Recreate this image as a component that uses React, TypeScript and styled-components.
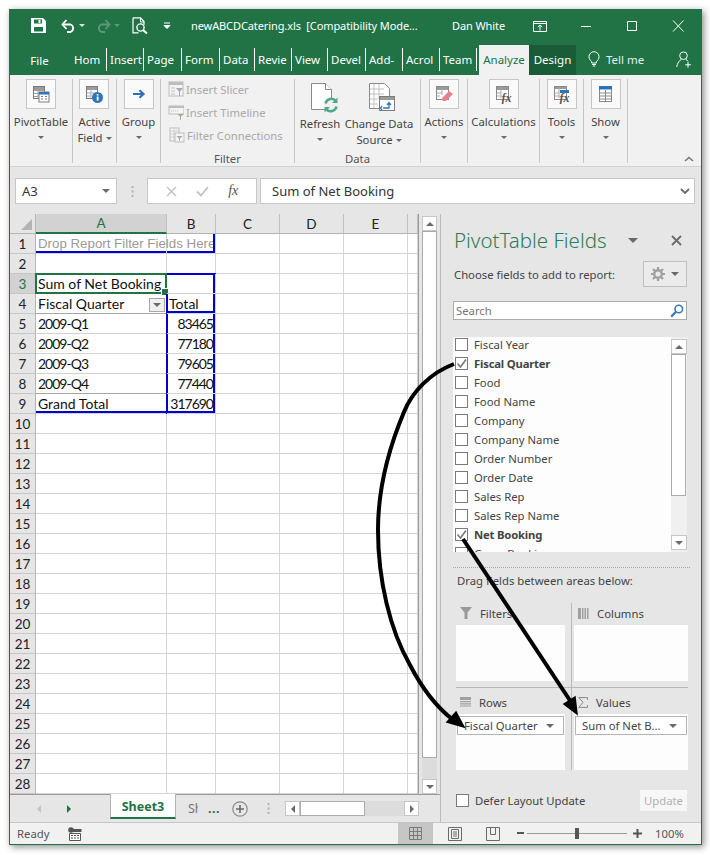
import React from "react";
import styled, { createGlobalStyle } from "styled-components";

const UI_FONT = `"Noto Sans", "Open Sans", sans-serif`;
const CELL_FONT = `Lato, "Open Sans", sans-serif`;
const GREEN = "#217346";
const BLUE = "#0000cd";

const GlobalStyle = createGlobalStyle`
  html, body { margin: 0; padding: 0; background: #ffffff; }
  body { font-family: ${UI_FONT}; }
  * { box-sizing: border-box; }
`;

/* ---------- window shell ---------- */

const Page = styled.div`
  position: relative;
  width: 710px;
  height: 855px;
  padding: 9px 0 0 9px;
  overflow: hidden;
`;

const Frame = styled.div`
  width: 693px;
  height: 836px;
  border: 1px solid ${GREEN};
  box-shadow: 2px 2px 7px rgba(0, 0, 0, 0.45);
  display: flex;
  flex-direction: column;
  background: #e6e6e6;
`;

const TitleBar = styled.div`
  height: 35px;
  flex: none;
  padding-bottom: 4px;
  background: ${GREEN};
  color: #ffffff;
  display: flex;
  align-items: center;
`;

const TitleSlot = styled.div<{ $left: number; $width: number }>`
  margin-left: ${(p) => p.$left}px;
  width: ${(p) => p.$width}px;
  flex: none;
  display: flex;
  align-items: center;
  justify-content: center;
  white-space: nowrap;
`;

const TitleText = styled.div<{ $width: number; $left?: number }>`
  margin-left: ${(p) => p.$left ?? 0}px;
  width: ${(p) => p.$width}px;
  flex: none;
  white-space: pre;
  font-size: 11px;
  letter-spacing: -0.1px;
`;

const TabRow = styled.div`
  height: 30px;
  flex: none;
  background: ${GREEN};
  display: flex;
  align-items: stretch;
  color: #ffffff;
  font-size: 11.5px;
`;

const FileTab = styled.div`
  width: 61px;
  flex: none;
  display: flex;
  align-items: center;
  justify-content: center;
  padding-right: 2px;
`;

const Tab = styled.div<{ $width: number }>`
  width: ${(p) => p.$width}px;
  flex: none;
  margin: 3px 0 4px;
  padding-left: 3px;
  border-right: 1px solid #ffffff;
  overflow: hidden;
  white-space: nowrap;
  display: flex;
  align-items: center;
`;

const ActiveTab = styled.div`
  width: 50px;
  margin-left: 2px;
  padding-bottom: 2px;
  flex: none;
  background: #f1f1f1;
  color: ${GREEN};
  display: flex;
  align-items: center;
  justify-content: center;
`;

const DesignTab = styled.div`
  width: 47px;
  padding-bottom: 2px;
  flex: none;
  background: #1a5c38;
  display: flex;
  align-items: center;
  justify-content: center;
`;

const TellMe = styled.div`
  margin-left: 12px;
  padding-bottom: 2px;
  width: 88px;
  flex: none;
  display: flex;
  align-items: center;
  gap: 6px;
  color: #e4efe9;
`;

const AccountIcon = styled.div`
  padding-bottom: 2px;
  display: flex;
  align-items: center;
`;

/* ---------- ribbon ---------- */

const Ribbon = styled.div`
  height: 92px;
  flex: none;
  position: relative;
  background: #f1f1f1;
  border-bottom: 1px solid #d2d2d2;
  display: flex;
  padding-top: 4px;
  color: #444444;
  font-size: 11.3px;
`;

const Group = styled.div<{ $width: number }>`
  width: ${(p) => p.$width}px;
  height: 84px;
  flex: none;
  border-right: 1px solid #c6c6c6;
  display: flex;
  flex-direction: column;
  align-items: center;
  position: relative;
`;

const GroupBody = styled.div`
  flex: 1;
  display: flex;
  justify-content: flex-start;
  width: 100%;
  min-height: 0;
`;

const GroupLabel = styled.div`
  height: 16px;
  margin-bottom: -4px;
  line-height: 16px;
  color: #555555;
  text-align: center;
`;

const BoxedButton = styled.div<{ $width?: number }>`
  width: ${(p) => (p.$width ? `${p.$width}px` : "auto")};
  flex: none;
  display: flex;
  flex-direction: column;
  align-items: center;
  line-height: 15px;
  white-space: nowrap;
`;

const IconBox = styled.div`
  width: 30px;
  height: 30px;
  background: #fafafa;
  border: 1px solid #c6c6c6;
  display: flex;
  align-items: center;
  justify-content: center;
  margin-bottom: 5px;
`;

const BareIcon = styled.div<{ $shift: number }>`
  height: 34px;
  padding-left: ${(p) => p.$shift}px;
  display: flex;
  align-items: flex-end;
  justify-content: center;
  margin-bottom: 3px;
`;

const ButtonLabel = styled.div`
  text-align: center;
  line-height: 16px;
`;

const Caret = styled.span<{ $inline?: boolean }>`
  display: ${(p) => (p.$inline ? "inline-block" : "block")};
  width: 0;
  height: 0;
  margin: ${(p) => (p.$inline ? "0 0 2px 3px" : "6px auto 0")};
  border-left: 3px solid transparent;
  border-right: 3px solid transparent;
  border-top: 3px solid #6a6a6a;
`;

const DisabledList = styled.div`
  display: flex;
  flex-direction: column;
  width: 100%;
  padding: 0 0 0 7px;
  gap: 3px;
  color: #a9a9a9;
`;

const DisabledItem = styled.div`
  height: 20px;
  display: flex;
  align-items: center;
  gap: 2px;
  white-space: nowrap;
`;

const CollapseChevron = styled.div`
  position: absolute;
  right: 7px;
  bottom: 4px;
  display: flex;
`;

/* ---------- formula bar ---------- */

const FormulaBand = styled.div`
  height: 47px;
  flex: none;
  background: #e6e6e6;
  padding: 11px 6px 0 5px;
  display: flex;
  align-items: flex-start;
  font-size: 13px;
  color: #333333;
`;

const NameBox = styled.div`
  width: 102px;
  height: 26px;
  background: #ffffff;
  border: 1px solid #c6c6c6;
  display: flex;
  align-items: center;
  justify-content: space-between;
  padding: 0 6px;
`;

const Grip = styled.div`
  width: 30px;
  height: 26px;
  display: flex;
  align-items: center;
  justify-content: center;
`;

const FormulaTools = styled.div`
  width: 110px;
  height: 26px;
  background: #ffffff;
  border: 1px solid #c6c6c6;
  display: flex;
  align-items: center;
  justify-content: space-around;
  padding: 0 8px;
`;

const FxLabel = styled.span`
  font-family: "Liberation Serif", serif;
  font-style: italic;
  font-size: 14px;
  color: #555555;
`;

const FormulaInput = styled.div`
  margin-left: 3px;
  width: 435px;
  height: 26px;
  background: #ffffff;
  border: 1px solid #c6c6c6;
  display: flex;
  align-items: center;
  justify-content: space-between;
  padding: 0 4px 0 11px;
`;

/* ---------- sheet ---------- */

const Body = styled.div`
  flex: 1;
  min-height: 0;
  display: flex;
`;

const SheetColumn = styled.div`
  width: 430px;
  flex: none;
  display: flex;
  flex-direction: column;
`;

const SheetRow = styled.div`
  height: 580px;
  flex: none;
  display: flex;
`;

const Grid = styled.div`
  width: 409px;
  height: 580px;
  flex: none;
  background: #ffffff;
  border-right: 1px solid #9a9a9a;
  display: grid;
  grid-template-columns: 26px 131px 49px 64px 64px 64px 10px;
  grid-template-rows: repeat(29, 20px);
  font-family: ${CELL_FONT};
  font-size: 14px;
  color: #111111;
`;

const Corner = styled.div`
  background: #e6e6e6;
  border-right: 1px solid #b4b4b4;
  border-bottom: 1px solid #b4b4b4;
  display: flex;
  align-items: flex-end;
  justify-content: flex-end;
  padding: 0 3px 3px 0;
`;

const ColHeader = styled.div<{ $active?: boolean }>`
  background: ${(p) => (p.$active ? "#d2d2d2" : "#e6e6e6")};
  color: ${(p) => (p.$active ? GREEN : "#222222")};
  border-right: 1px solid #c0c0c0;
  border-bottom: ${(p) => (p.$active ? `2px solid ${GREEN}` : "1px solid #b4b4b4")};
  display: flex;
  align-items: center;
  justify-content: center;
  font-size: 13.5px;
`;

const RowHeader = styled.div<{ $active?: boolean }>`
  background: ${(p) => (p.$active ? "#d2d2d2" : "#e6e6e6")};
  color: ${(p) => (p.$active ? GREEN : "#222222")};
  border-right: ${(p) => (p.$active ? `1px solid ${GREEN}` : "1px solid #b4b4b4")};
  border-bottom: 1px solid #c6c6c6;
  display: flex;
  align-items: center;
  justify-content: center;
  font-size: 13.5px;
`;

type Edges = { top?: boolean; right?: boolean; bottom?: boolean; left?: boolean };

// blue pivot outline, drawn half over the gridline like Excel does
const edgeShadow = (e?: Edges) => {
  if (!e) return "none";
  const parts: string[] = [];
  if (e.top) parts.push(`0 -1px 0 ${BLUE}, inset 0 1px 0 ${BLUE}`);
  if (e.right) parts.push(`inset -2px 0 0 ${BLUE}`);
  if (e.bottom) parts.push(`inset 0 -2px 0 ${BLUE}`);
  if (e.left) parts.push(`-1px 0 0 ${BLUE}, inset 1px 0 0 ${BLUE}`);
  return parts.join(", ") || "none";
};

const Cell = styled.div<{ $edges?: Edges; $align?: string; $muted?: boolean; $pivotLine?: boolean; $tight?: boolean }>`
  position: relative;
  border-right: 1px solid #d4d4d4;
  border-bottom: 1px solid ${(p) => (p.$pivotLine ? "#a6a6a6" : "#d4d4d4")};
  box-shadow: ${(p) => edgeShadow(p.$edges)};
  padding: 0 2px;
  display: flex;
  align-items: center;
  justify-content: ${(p) => p.$align ?? "flex-start"};
  white-space: nowrap;
  color: ${(p) => (p.$muted ? "#9a9a9a" : "inherit")};
  font-family: ${(p) => (p.$muted ? `"Liberation Sans", sans-serif` : "inherit")};
  font-size: ${(p) => (p.$muted ? "13.3px" : "inherit")};
  letter-spacing: ${(p) => (p.$tight ? "-1px" : "normal")};
  overflow: visible;
  min-width: 0;
`;

const Selection = styled.div`
  position: absolute;
  inset: -1px;
  border: 2px solid ${GREEN};
  pointer-events: none;
  &::after {
    content: "";
    position: absolute;
    right: -4px;
    bottom: -4px;
    width: 6px;
    height: 6px;
    background: ${GREEN};
    border: 1px solid #ffffff;
  }
`;

const FilterButton = styled.div`
  position: absolute;
  right: 1px;
  top: 4px;
  width: 16px;
  height: 14px;
  background: #f0f0f0;
  border: 1px solid #a6a6a6;
  display: flex;
  align-items: center;
  justify-content: center;
`;

const VScroll = styled.div`
  margin-left: 3px;
  margin-top: 2px;
  width: 15px;
  height: 578px;
  flex: none;
  display: flex;
  flex-direction: column;
  background: #dcdcdc;
`;

const ScrollButton = styled.div<{ $w?: number; $h?: number }>`
  width: ${(p) => p.$w ?? 15}px;
  height: ${(p) => p.$h ?? 15}px;
  flex: none;
  background: #ffffff;
  border: 1px solid #c6c6c6;
  display: flex;
  align-items: center;
  justify-content: center;
`;

const ScrollThumb = styled.div<{ $h: number }>`
  width: 15px;
  height: ${(p) => p.$h}px;
  flex: none;
  background: #ffffff;
  border: 1px solid #ababab;
`;

const ScrollTrack = styled.div`
  flex: 1;
  width: 15px;
`;

const Arrow = styled.span<{ $dir: "up" | "down" | "left" | "right"; $color?: string; $size?: number }>`
  width: 0;
  height: 0;
  display: block;
  flex: none;
  ${(p) => {
    const c = p.$color ?? "#6a6a6a";
    const s = p.$size ?? 4;
    if (p.$dir === "up") return `border-left:${s}px solid transparent;border-right:${s}px solid transparent;border-bottom:${s}px solid ${c};`;
    if (p.$dir === "down") return `border-left:${s}px solid transparent;border-right:${s}px solid transparent;border-top:${s}px solid ${c};`;
    if (p.$dir === "left") return `border-top:${s}px solid transparent;border-bottom:${s}px solid transparent;border-right:${s}px solid ${c};`;
    return `border-top:${s}px solid transparent;border-bottom:${s}px solid transparent;border-left:${s}px solid ${c};`;
  }}
`;

/* ---------- sheet tabs ---------- */

const SheetTabBar = styled.div`
  flex: 1;
  border-top: 1px solid #9a9a9a;
  background: #e6e6e6;
  display: flex;
  align-items: stretch;
  font-size: 12.5px;
  color: #777777;
`;

const TabNav = styled.div`
  width: 100px;
  flex: none;
  display: flex;
  align-items: center;
  padding-left: 27px;
  gap: 26px;
`;

const SheetTab = styled.div`
  width: 66px;
  height: 25px;
  flex: none;
  background: #ffffff;
  border-left: 1px solid #b4b4b4;
  border-right: 1px solid #b4b4b4;
  border-bottom: 2px solid ${GREEN};
  margin-top: -1px;
  padding-top: 2px;
  color: ${GREEN};
  font-weight: 700;
  display: flex;
  align-items: center;
  justify-content: center;
`;

const OtherSheet = styled.div`
  margin-left: 12px;
  width: 10px;
  flex: none;
  overflow: hidden;
  display: flex;
  align-items: center;
`;

const Ellipsis = styled.div`
  margin-left: 10px;
  flex: none;
  width: 24px;
  color: ${GREEN};
  font-weight: 700;
  display: flex;
  align-items: center;
  letter-spacing: 0.5px;
`;

const AddSheet = styled.div`
  flex: none;
  width: 30px;
  display: flex;
  align-items: center;
  justify-content: flex-start;
`;

const SheetGrip = styled.div`
  flex: none;
  width: 23px;
  display: flex;
  align-items: center;
  padding-left: 5px;
`;

const HScroll = styled.div`
  width: 134px;
  flex: none;
  height: 15px;
  margin-top: 6px;
  display: flex;
  background: #dcdcdc;
`;

const HThumb = styled.div`
  width: 65px;
  flex: none;
  height: 15px;
  background: #ffffff;
  border: 1px solid #ababab;
`;

const HTrack = styled.div`
  flex: 1;
`;

/* ---------- pivot panel ---------- */

const Panel = styled.div`
  flex: 1;
  min-width: 0;
  border-left: 1px solid #bcbcbc;
  background: #e6e6e6;
  padding: 0 14px 0 12px;
  display: flex;
  flex-direction: column;
  color: #444444;
  font-size: 11.3px;
`;

const PanelHeader = styled.div`
  height: 36px;
  margin-top: 8px;
  padding-left: 1px;
  display: flex;
  align-items: center;
  justify-content: space-between;
`;

const PanelTitle = styled.div`
  font-size: 20.5px;
  font-weight: 300;
  color: #2c7d54;
  white-space: nowrap;
`;

const PanelTools = styled.div`
  display: flex;
  align-items: center;
  gap: 33px;
  padding-right: 5px;
`;

const ChooseRow = styled.div`
  margin-top: 3px;
  height: 26px;
  padding-left: 1px;
  display: flex;
  align-items: center;
  justify-content: space-between;
`;

const GearButton = styled.div`
  width: 44px;
  height: 26px;
  background: #ebebeb;
  border: 1px solid #c0c0c0;
  display: flex;
  align-items: center;
  justify-content: center;
  gap: 6px;
`;

const SearchBox = styled.div`
  margin-top: 14px;
  height: 19px;
  background: #ffffff;
  border: 1px solid #ababab;
  display: flex;
  align-items: center;
  justify-content: space-between;
  padding: 0 2px;
  color: #777777;
`;

const FieldList = styled.div`
  margin-top: 17px;
  height: 215px;
  background: #fdfdfd;
  display: flex;
  overflow: hidden;
`;

const Fields = styled.div`
  flex: 1;
  min-width: 0;
  margin-top: -2px;
  padding-left: 2px;
  overflow: hidden;
`;

const FieldRow = styled.div<{ $bold?: boolean }>`
  height: 19px;
  display: flex;
  align-items: center;
  gap: 6px;
  font-weight: ${(p) => (p.$bold ? 700 : 400)};
  letter-spacing: ${(p) => (p.$bold ? "-0.2px" : "normal")};
  white-space: nowrap;
`;

const Check = styled.div`
  width: 13px;
  height: 13px;
  flex: none;
  background: #ffffff;
  border: 1px solid #7a7a7a;
  display: flex;
  align-items: center;
  justify-content: center;
`;

const ListScroll = styled.div`
  width: 16px;
  flex: none;
  display: flex;
  flex-direction: column;
  padding-top: 2px;
  padding-bottom: 2px;
  background: #f0f0f0;
`;

const Dotted = styled.div`
  margin-top: 15px;
  margin-right: -3px;
  border-top: 1px dotted #a6a6a6;
`;

const DragHint = styled.div`
  margin-top: 5px;
  padding-left: 4px;
  height: 16px;
  line-height: 16px;
`;

const Areas = styled.div`
  margin-top: 14px;
  padding-left: 3px;
  display: grid;
  grid-template-columns: 115px 117px;
  grid-template-rows: 84px 83px;
`;

const Area = styled.div<{ $right?: boolean; $lower?: boolean }>`
  display: flex;
  flex-direction: column;
  border-left: ${(p) => (p.$right ? "1px solid #b8b8b8" : "none")};
  padding-left: ${(p) => (p.$right ? "2px" : "0")};
  padding-right: ${(p) => (p.$right ? "0" : "6px")};
  padding-top: ${(p) => (p.$lower ? "4px" : "0")};
  padding-bottom: ${(p) => (p.$lower ? "0" : "6px")};
  border-top: ${(p) => (p.$lower ? "1px solid #b8b8b8" : "none")};
`;

const AreaHead = styled.div`
  height: 22px;
  padding: 0 0 2px 4px;
  display: flex;
  align-items: center;
  gap: 8px;
  flex: none;
`;

const AreaBox = styled.div`
  flex: 1;
  background: #fdfdfd;
  padding: 2px 1px;
`;

const Chip = styled.div`
  height: 19px;
  background: #ffffff;
  border: 1px solid #b4b4b4;
  display: flex;
  align-items: center;
  justify-content: space-between;
  padding: 0 9px 0 6px;
  white-space: nowrap;
`;

const PanelFooter = styled.div`
  margin-top: 20px;
  padding-left: 3px;
  height: 21px;
  display: flex;
  align-items: center;
  justify-content: space-between;
`;

const DeferLabel = styled.div`
  display: flex;
  align-items: center;
  gap: 6px;
`;

const UpdateButton = styled.div`
  width: 47px;
  height: 21px;
  background: #f7f7f7;
  color: #b0b0b0;
  display: flex;
  align-items: center;
  justify-content: center;
`;

/* ---------- status bar ---------- */

const StatusBar = styled.div`
  height: 22px;
  flex: none;
  background: #f1f1f1;
  border-top: 1px solid #c6c6c6;
  display: flex;
  align-items: center;
  font-size: 11.3px;
  color: #555555;
`;

const ReadyText = styled.div`
  width: 58px;
  padding-left: 7px;
  flex: none;
`;

const ViewActive = styled.div`
  margin-left: 316px;
  width: 35px;
  height: 21px;
  background: #c6c6c6;
  flex: none;
  display: flex;
  align-items: center;
  justify-content: center;
`;

const ViewButton = styled.div<{ $left?: number }>`
  margin-left: ${(p) => p.$left ?? 0}px;
  width: 38px;
  flex: none;
  display: flex;
  align-items: center;
  justify-content: center;
`;

const ZoomControl = styled.div`
  margin-left: 5px;
  display: flex;
  align-items: center;
  flex: none;
  width: 130px;
  gap: 3px;
`;

const ZoomTrack = styled.div`
  position: relative;
  width: 100px;
  height: 1px;
  margin-right: 3px;
  background: #9a9a9a;
  flex: none;
`;

const ZoomThumb = styled.div`
  position: absolute;
  left: 48px;
  top: -5px;
  width: 4px;
  height: 11px;
  background: #555555;
`;

const ZoomValue = styled.div`
  margin-left: 8px;
`;

const ArrowLayer = styled.svg`
  position: absolute;
  left: 0;
  top: 0;
  pointer-events: none;
`;

/* ---------- drawings ---------- */

const SheetGlyph = ({ accent }: { accent?: string }) => (
  <svg width="20" height="20" viewBox="0 0 20 20">
    <rect x="2.5" y="2.5" width="11" height="12" fill="#fff" stroke="#7a7a7a" />
    <path d="M3 6.5h10M3 9.5h4M3 12.5h4M7 3v11" stroke="#a0a0a0" fill="none" />
    <rect x="3" y="3" width="10" height="3" fill="#9a9a9a" />
    <rect x="8" y="8" width="10" height="10" fill="#fff" stroke="#7a7a7a" />
    {accent && <rect x="8" y="8" width="10" height="2.5" fill={accent} />}
    <path d="M10 12.5h2M14 12.5h2M10 15h2M14 15h2" stroke="#7a7a7a" />
  </svg>
);

const InfoGlyph = () => (
  <svg width="22" height="22" viewBox="0 0 22 22">
    <rect x="3.5" y="3.5" width="11" height="12" fill="#fff" stroke="#7a7a7a" />
    <rect x="4" y="4" width="10" height="3" fill="#9a9a9a" />
    <path d="M4 10h10M4 13h4M8 4v11" stroke="#a8a8a8" />
    <circle cx="14.5" cy="14.5" r="5.5" fill="#2f75b5" />
    <rect x="13.7" y="13.5" width="1.8" height="4" fill="#fff" />
    <rect x="13.7" y="11" width="1.8" height="1.6" fill="#fff" />
  </svg>
);

const GroupGlyph = () => (
  <svg width="14" height="10" viewBox="0 0 14 10">
    <path d="M1 5h10M7.5 1.2L11.5 5 7.5 8.8" stroke="#2f6fb5" strokeWidth="2.2" fill="none" />
  </svg>
);

const SlicerGlyph = () => (
  <svg width="16" height="16" viewBox="0 0 16 16">
    <rect x="1" y="1" width="14" height="14" fill="#f4f4f4" stroke="#bdbdbd" />
    <rect x="1" y="1" width="14" height="3" fill="#bdbdbd" />
    <path d="M3 7h4M3 10h4M3 13h4" stroke="#bdbdbd" />
    <path d="M8 7h7l-3 3.5V15h-1v-4.5z" fill="#a8a8a8" />
  </svg>
);

const TimelineGlyph = () => (
  <svg width="16" height="16" viewBox="0 0 16 16">
    <rect x="1" y="2" width="15" height="8" fill="#f4f4f4" stroke="#bdbdbd" />
    <rect x="1" y="2" width="15" height="2" fill="#bdbdbd" />
    <path d="M3 7h7" stroke="#bdbdbd" strokeDasharray="1 1" />
    <path d="M9 10h7l-3 2.5V16h-1v-3.5z" fill="#a8a8a8" />
  </svg>
);

const ConnectionGlyph = () => (
  <svg width="17" height="17" viewBox="0 0 17 17">
    <rect x="2" y="1" width="9" height="13" fill="#f4f4f4" stroke="#bdbdbd" />
    <path d="M2 4h9M2 7h9M2 10h9M6 1v13" stroke="#cfcfcf" />
    <rect x="7" y="6" width="9" height="9" fill="#f4f4f4" stroke="#bdbdbd" />
    <path d="M8.5 9h6l-2.5 2.5V14h-1v-2.5z" fill="#a8a8a8" />
  </svg>
);

const RefreshGlyph = () => (
  <svg width="30" height="31" viewBox="0 0 30 31">
    <path d="M2.5 1.5h14l6 6v20h-20z" fill="#fff" stroke="#8a8a8a" />
    <path d="M16.5 1.5v6h6" fill="#fff" stroke="#8a8a8a" />
    <circle cx="22" cy="23" r="7" fill="#f1f1f1" />
    <path d="M16.5 21.5a6 6 0 0 1 10.5-2.5" stroke="#4ea88a" strokeWidth="2.6" fill="none" />
    <path d="M27.5 24.5a6 6 0 0 1-10.5 2.5" stroke="#4ea88a" strokeWidth="2.6" fill="none" />
    <path d="M28.5 15.5v5.5h-5.5zM15.5 30.5V25h5.5z" fill="#4ea88a" />
  </svg>
);

const ChangeSourceGlyph = () => (
  <svg width="28" height="31" viewBox="0 0 28 31">
    <path d="M1.5 1.5h15l5 5v20h-20z" fill="#fff" stroke="#8a8a8a" />
    <path d="M2 7h14M2 12h14M2 17h8M2 22h8M6 2v24M11 2v15" stroke="#c0c0c0" fill="none" />
    <rect x="11.5" y="14.5" width="15" height="14" fill="#fff" stroke="#7a7a7a" />
    <rect x="12" y="15" width="14" height="3" fill="#9a9a9a" />
    <path d="M15 26h6v-5M19 23l2-2.5 2 2.5M14 24l-1.5 2 1.5 2" stroke="#2f75b5" strokeWidth="1.3" fill="none" />
  </svg>
);

const ActionsGlyph = () => (
  <svg width="20" height="20" viewBox="0 0 20 20">
    <rect x="2.5" y="2.5" width="12" height="13" fill="#fff" stroke="#8a8a8a" />
    <rect x="3" y="3" width="11" height="3" fill="#9a9a9a" />
    <path d="M3 9h5M3 12h3M8 3v8" stroke="#a8a8a8" />
    <path d="M8 14l7-7 4 3-7 7H9z" fill="#e8808f" />
  </svg>
);

const CalcGlyph = ({ accent }: { accent?: string }) => (
  <svg width="20" height="20" viewBox="0 0 20 20">
    <rect x="2.5" y="2.5" width="12" height="13" fill="#fff" stroke="#8a8a8a" />
    <rect x="3" y="3" width="11" height={accent ? 2 : 3} fill="#9a9a9a" />
    {accent && <rect x="8" y="6" width="9" height="3" fill={accent} />}
    <path d="M3 9h4M3 12h4M7 3v11" stroke="#a8a8a8" />
    <text x="7.5" y="18" fontFamily="Liberation Serif, serif" fontStyle="italic" fontWeight="700" fontSize="12" fill="#555">fx</text>
  </svg>
);

const ShowGlyph = () => (
  <svg width="15" height="16" viewBox="0 0 15 16">
    <rect x="1.5" y="0.5" width="12" height="15" fill="#fff" stroke="#8a8a8a" />
    <rect x="1" y="0" width="13" height="3.5" fill="#2f6fb5" />
    <path d="M2 7h11M2 10h11M2 13h11M7.5 4v11" stroke="#8a8a8a" />
  </svg>
);

const PlainGlyph = ({ name }: { name: string }) => {
  switch (name) {
    case "pivot": return <SheetGlyph accent="#2f75b5" />;
    case "info": return <InfoGlyph />;
    case "group": return <GroupGlyph />;
    case "actions": return <ActionsGlyph />;
    case "calc": return <CalcGlyph />;
    case "tools": return <CalcGlyph accent="#2f75b5" />;
    default: return <ShowGlyph />;
  }
};

const SaveIcon = () => (
  <svg width="15" height="15" viewBox="0 0 15 15">
    <path fillRule="evenodd" fill="#fff" d="M0 0h12l3 3v12H0zM3 1.5v4h8v-4zM3 9v4.5h9V9z" />
    <rect x="7.5" y="2" width="2" height="3" fill="#fff" />
  </svg>
);

const UndoIcon = ({ color }: { color: string }) => (
  <svg width="15" height="14" viewBox="0 0 15 14">
    <path d="M1.5 5.5h8a4 4 0 0 1 0 7.5H6" stroke={color} strokeWidth="1.8" fill="none" />
    <path d="M5.5 1L1.5 5.5 5.5 10" stroke={color} strokeWidth="1.8" fill="none" />
  </svg>
);

const PreviewIcon = () => (
  <svg width="16" height="17" viewBox="0 0 16 17">
    <path d="M1 .8h7.5L12 4.5V8M1 .8v15h5.5" stroke="#fff" strokeWidth="1.2" fill="none" />
    <circle cx="8.5" cy="10.5" r="3.6" stroke="#fff" strokeWidth="1.4" fill="none" />
    <path d="M11 13l4 3.5" stroke="#fff" strokeWidth="2" />
    <path d="M8.5 1v4H12" stroke="#fff" fill="none" />
  </svg>
);

const GreenWindowIcon = ({ kind }: { kind: "ribbon" | "min" | "max" | "close" }) => (
  <svg width="14" height="12" viewBox="0 0 14 12">
    {kind === "ribbon" && (
      <path d="M.5 1.5h13v10H.5zM.5 3.5h13M7 10.5V5M4.8 7L7 5l2.2 2" stroke="#fff" fill="none" />
    )}
    {kind === "min" && <path d="M2 6.5h10" stroke="#fff" />}
    {kind === "max" && <path d="M2.5 1.5h9v9h-9z" stroke="#fff" fill="none" />}
    {kind === "close" && <path d="M2 .5l10.5 11M12.5 .5L2 11.5" stroke="#fff" fill="none" />}
  </svg>
);

const BulbIcon = () => (
  <svg width="12" height="16" viewBox="0 0 12 16">
    <path d="M3.6 10.6C2.6 9.4 1 8.3 1 5.7a5 5 0 0 1 10 0c0 2.6-1.6 3.7-2.6 4.9V12H3.6z" stroke="#fff" fill="none" />
    <path d="M4 13.5h4M4.8 15h2.4" stroke="#fff" />
  </svg>
);

const PersonIcon = () => (
  <svg width="16" height="17" viewBox="0 0 16 17">
    <circle cx="7.5" cy="4.7" r="3.8" stroke="#fff" fill="none" />
    <path d="M.7 16c.6-3.8 2.6-6.6 4.6-7.6M9.8 8.4c1 .4 1.6 1 2.2 2" stroke="#fff" fill="none" />
    <path d="M12 11v5.6M9.3 13.8h5.6" stroke="#fff" />
  </svg>
);

const GridViewIcon = () => (
  <svg width="13" height="13" viewBox="0 0 13 13">
    <path d="M.5.5h12v12H.5zM4.5.5v12M8.5.5v12M.5 4.5h12M.5 8.5h12" stroke="#7a7a7a" fill="none" />
  </svg>
);

const FilterGlyph = () => (
  <svg width="12" height="12" viewBox="0 0 12 12">
    <path d="M0 0h12L7.5 5.5V12H4.5V5.5z" fill="#9a9a9a" />
  </svg>
);

const ColumnsGlyph = () => (
  <svg width="11" height="11" viewBox="0 0 11 11">
    <path d="M0 0h3v11H0zM4 0h1.5v11H4zM6.5 0H8v11H6.5zM9 0h1.5v11H9z" fill="#a0a0a0" />
  </svg>
);

const RowsGlyph = () => (
  <svg width="11" height="10" viewBox="0 0 11 10">
    <path d="M0 0h11v3H0zM0 4h11v1.2H0zM0 6.2h11v1.2H0zM0 8.4h11v1.2H0z" fill="#a0a0a0" />
  </svg>
);

const SigmaGlyph = () => (
  <svg width="10" height="11" viewBox="0 0 10 11">
    <path d="M9.5 2.8V.6H.8L5 5.4.8 10.4h8.7V8.2" stroke="#8a8a8a" fill="none" />
  </svg>
);

const GearIcon = () => (
  <svg width="14" height="14" viewBox="0 0 14 14">
    <circle cx="7" cy="7" r="3.8" stroke="#a0a0a0" strokeWidth="2.4" fill="none" />
    <path d="M7 0v3M7 11v3M0 7h3M11 7h3M2 2l2.2 2.2M9.8 9.8L12 12M12 2L9.8 4.2M4.2 9.8L2 12" stroke="#a0a0a0" strokeWidth="2.2" />
  </svg>
);

const SearchIcon = () => (
  <svg width="14" height="14" viewBox="0 0 14 14">
    <circle cx="8.8" cy="5" r="3.8" stroke="#3a78b8" strokeWidth="1.6" fill="none" />
    <path d="M6 7.8L1.2 12.6" stroke="#3a78b8" strokeWidth="2.2" />
  </svg>
);

const CheckMark = () => (
  <svg width="11" height="11" viewBox="0 0 11 11">
    <path d="M1.5 5.5l3 3.5L10 1.5" stroke="#777" strokeWidth="1.6" fill="none" />
  </svg>
);

const GripDots = () => (
  <svg width="3" height="11" viewBox="0 0 3 11">
    <path d="M1.5 0v2M1.5 4.5v2M1.5 9v2" stroke="#b0b0b0" strokeWidth="2" />
  </svg>
);

/* ---------- data ---------- */

const tabs: [string, number][] = [
  ["Hom", 36], ["Insert", 37], ["Page", 38], ["Form", 38], ["Data", 35], ["Revie", 37],
  ["View", 36], ["Devel", 38], ["Add-", 37], ["Acrol", 37], ["Team", 37],
];

const fields: [string, boolean][] = [
  ["Fiscal Year", false], ["Fiscal Quarter", true], ["Food", false], ["Food Name", false],
  ["Company", false], ["Company Name", false], ["Order Number", false], ["Order Date", false],
  ["Sales Rep", false], ["Sales Rep Name", false], ["Net Booking", true], ["Gross Booking", false],
];

type CellSpec = {
  text?: string;
  edges?: Edges;
  align?: string;
  muted?: boolean;
  selected?: boolean;
  filter?: boolean;
  pivotLine?: boolean;
  tight?: boolean;
};

const valueEdges: Edges = { right: true, left: true };
const value = (text: string): CellSpec => ({ text, align: "flex-end", edges: valueEdges, tight: true });

const sheet: Record<number, CellSpec[]> = {
  1: [{ text: "Drop Report Filter Fields Here", muted: true, edges: { bottom: true } }, { edges: { bottom: true, right: true } }],
  3: [{ text: "Sum of Net Booking", selected: true, edges: { top: true } }, { edges: { top: true, right: true } }],
  4: [{ text: "Fiscal Quarter", filter: true, pivotLine: true }, { text: "Total", edges: { right: true, bottom: true, left: true } }],
  5: [{ text: "2009-Q1", tight: true }, value("83465")],
  6: [{ text: "2009-Q2", tight: true }, value("77180")],
  7: [{ text: "2009-Q3", tight: true }, value("79605")],
  8: [{ text: "2009-Q4", tight: true, pivotLine: true }, value("77440")],
  9: [{ text: "Grand Total", edges: { bottom: true } }, { ...value("317690"), edges: { right: true, left: true, bottom: true } }],
};

const rows = Array.from({ length: 28 }, (_, i) => i + 1);

function SheetCells({ row }: { row: number }) {
  const spec = sheet[row] ?? [];
  return (
    <>
      <RowHeader $active={row === 3}>{row}</RowHeader>
      {[0, 1, 2, 3, 4, 5].map((c) => {
        const s = spec[c];
        return (
          <Cell key={c} $edges={s?.edges} $align={s?.align} $muted={s?.muted} $pivotLine={s?.pivotLine} $tight={s?.tight}>
            {s?.text}
            {s?.selected && <Selection />}
            {s?.filter && (
              <FilterButton>
                <Arrow $dir="down" />
              </FilterButton>
            )}
          </Cell>
        );
      })}
    </>
  );
}

export default function App() {
  return (
    <Page>
      <GlobalStyle />
      <Frame>
        <TitleBar>
          <TitleSlot $left={21} $width={15}><SaveIcon /></TitleSlot>
          <TitleSlot $left={14} $width={16}><UndoIcon color="#fff" /></TitleSlot>
          <TitleSlot $left={2} $width={8}><Arrow $dir="down" $color="#d8e8df" $size={3} /></TitleSlot>
          <TitleSlot $left={9} $width={16}><span style={{ display: "flex", transform: "scaleX(-1)" }}><UndoIcon color="#5a9a78" /></span></TitleSlot>
          <TitleSlot $left={2} $width={8}><Arrow $dir="down" $color="#5a9a78" $size={3} /></TitleSlot>
          <TitleSlot $left={10} $width={17}><PreviewIcon /></TitleSlot>
          <TitleSlot $left={15} $width={8}>
            <svg width="8" height="8" viewBox="0 0 8 8"><path d="M1 1h6M1 3.5h6l-3 3z" stroke="#fff" strokeWidth="1" fill="#fff" /></svg>
          </TitleSlot>
          <TitleText $left={20} $width={261}>newABCDCatering.xls  [Compatibility Mode...</TitleText>
          <TitleText $width={81}>Dan White</TitleText>
          <TitleSlot $left={0} $width={14}><GreenWindowIcon kind="ribbon" /></TitleSlot>
          <TitleSlot $left={32} $width={14}><GreenWindowIcon kind="min" /></TitleSlot>
          <TitleSlot $left={32} $width={14}><GreenWindowIcon kind="max" /></TitleSlot>
          <TitleSlot $left={32} $width={14}><GreenWindowIcon kind="close" /></TitleSlot>
        </TitleBar>
        <TabRow>
          <FileTab>File</FileTab>
          {tabs.map(([name, width]) => (
            <Tab key={name} $width={width}>{name}</Tab>
          ))}
          <ActiveTab>Analyze</ActiveTab>
          <DesignTab>Design</DesignTab>
          <TellMe><BulbIcon />Tell me</TellMe>
          <AccountIcon><PersonIcon /></AccountIcon>
        </TabRow>
        <Ribbon>
          {[
            { w: 63, label: "PivotTable", icon: "pivot" },
            { w: 44, label: "Active\nField", icon: "info", inline: true },
            { w: 44, label: "Group", icon: "group" },
          ].map((b) => (
            <Group key={b.label} $width={b.w}>
              <BoxedButton>
                <IconBox><PlainGlyph name={b.icon} /></IconBox>
                {b.inline ? (
                  <ButtonLabel>Active<br />Field<Caret $inline /></ButtonLabel>
                ) : (
                  <>
                    <ButtonLabel>{b.label}</ButtonLabel>
                    <Caret />
                  </>
                )}
              </BoxedButton>
            </Group>
          ))}
          <Group $width={134}>
            <GroupBody>
              <DisabledList>
                <DisabledItem><SlicerGlyph />Insert Slicer</DisabledItem>
                <DisabledItem><TimelineGlyph />Insert Timeline</DisabledItem>
                <DisabledItem><ConnectionGlyph />Filter Connections</DisabledItem>
              </DisabledList>
            </GroupBody>
            <GroupLabel>Filter</GroupLabel>
          </Group>
          <Group $width={126}>
            <GroupBody>
              <BoxedButton $width={50}>
                <BareIcon $shift={8}><RefreshGlyph /></BareIcon>
                <ButtonLabel>Refresh</ButtonLabel>
                <Caret />
              </BoxedButton>
              <BoxedButton $width={68}>
                <BareIcon $shift={5}><ChangeSourceGlyph /></BareIcon>
                <ButtonLabel>Change Data<br />Source<Caret $inline /></ButtonLabel>
              </BoxedButton>
            </GroupBody>
            <GroupLabel>Data</GroupLabel>
          </Group>
          {[
            { w: 47, label: "Actions", icon: "actions" },
            { w: 72, label: "Calculations", icon: "calc" },
            { w: 44, label: "Tools", icon: "tools" },
            { w: 44, label: "Show", icon: "show" },
          ].map((b) => (
            <Group key={b.label} $width={b.w}>
              <BoxedButton>
                <IconBox><PlainGlyph name={b.icon} /></IconBox>
                <ButtonLabel>{b.label}</ButtonLabel>
                <Caret />
              </BoxedButton>
            </Group>
          ))}
          <CollapseChevron>
            <svg width="10" height="6" viewBox="0 0 10 6"><path d="M1 5l4-3.5L9 5" stroke="#777" strokeWidth="1.6" fill="none" /></svg>
          </CollapseChevron>
        </Ribbon>
        <FormulaBand>
          <NameBox>A3<Arrow $dir="down" /></NameBox>
          <Grip><GripDots /></Grip>
          <FormulaTools>
            <svg width="11" height="11" viewBox="0 0 11 11"><path d="M1 1l9 9M10 1l-9 9" stroke="#c0c0c0" strokeWidth="1.4" /></svg>
            <svg width="13" height="11" viewBox="0 0 13 11"><path d="M1 5.5l4 4L12 1" stroke="#c0c0c0" strokeWidth="1.8" fill="none" /></svg>
            <FxLabel>fx</FxLabel>
          </FormulaTools>
          <FormulaInput>
            Sum of Net Booking
            <svg width="10" height="7" viewBox="0 0 10 7"><path d="M1 1l4 4 4-4" stroke="#6a6a6a" strokeWidth="1.8" fill="none" /></svg>
          </FormulaInput>
        </FormulaBand>
        <Body>
          <SheetColumn>
            <SheetRow>
              <Grid>
                <Corner>
                  <svg width="11" height="11" viewBox="0 0 11 11"><path d="M11 0v11H0z" fill="#b4b4b4" /></svg>
                </Corner>
                {["A", "B", "C", "D", "E", ""].map((c) => (
                  <ColHeader key={c} $active={c === "A"}>{c}</ColHeader>
                ))}
                {rows.map((r) => (
                  <SheetCells key={r} row={r} />
                ))}
              </Grid>
              <VScroll>
                <ScrollButton><Arrow $dir="up" /></ScrollButton>
                <ScrollThumb $h={527} />
                <ScrollTrack />
                <ScrollButton><Arrow $dir="down" /></ScrollButton>
              </VScroll>
            </SheetRow>
            <SheetTabBar>
              <TabNav>
                <Arrow $dir="left" $color="#c4c4c4" />
                <Arrow $dir="right" $color={GREEN} />
              </TabNav>
              <SheetTab>Sheet3</SheetTab>
              <OtherSheet>Sh</OtherSheet>
              <Ellipsis>...</Ellipsis>
              <AddSheet>
                <svg width="16" height="16" viewBox="0 0 16 16"><circle cx="8" cy="8" r="7.2" stroke="#8a8a8a" strokeWidth="1.2" fill="none" /><path d="M8 4v8M4 8h8" stroke="#6a6a6a" strokeWidth="1.6" /></svg>
              </AddSheet>
              <SheetGrip><GripDots /></SheetGrip>
              <HScroll>
                <ScrollButton><Arrow $dir="left" /></ScrollButton>
                <HThumb />
                <HTrack />
                <ScrollButton><Arrow $dir="right" /></ScrollButton>
              </HScroll>
            </SheetTabBar>
          </SheetColumn>
          <Panel>
            <PanelHeader>
              <PanelTitle>PivotTable Fields</PanelTitle>
              <PanelTools>
                <Arrow $dir="down" $size={5} />
                <svg width="11" height="11" viewBox="0 0 11 11"><path d="M1 1l9 9M10 1l-9 9" stroke="#6a6a6a" strokeWidth="1.8" /></svg>
              </PanelTools>
            </PanelHeader>
            <ChooseRow>
              Choose fields to add to report:
              <GearButton><GearIcon /><Arrow $dir="down" /></GearButton>
            </ChooseRow>
            <SearchBox>Search<SearchIcon /></SearchBox>
            <FieldList>
              <Fields>
                {fields.map(([name, on]) => (
                  <FieldRow key={name} $bold={on}>
                    <Check>{on && <CheckMark />}</Check>
                    {name}
                  </FieldRow>
                ))}
              </Fields>
              <ListScroll>
                <ScrollButton $w={16}><Arrow $dir="up" /></ScrollButton>
                <ScrollThumb $h={142} />
                <ScrollTrack />
                <ScrollButton $w={16}><Arrow $dir="down" /></ScrollButton>
              </ListScroll>
            </FieldList>
            <Dotted />
            <DragHint>Drag fields between areas below:</DragHint>
            <Areas>
              <Area>
                <AreaHead><FilterGlyph />Filters</AreaHead>
                <AreaBox />
              </Area>
              <Area $right>
                <AreaHead><ColumnsGlyph />Columns</AreaHead>
                <AreaBox />
              </Area>
              <Area $lower>
                <AreaHead><RowsGlyph />Rows</AreaHead>
                <AreaBox>
                  <Chip>Fiscal Quarter<Arrow $dir="down" /></Chip>
                </AreaBox>
              </Area>
              <Area $right $lower>
                <AreaHead><SigmaGlyph />Values</AreaHead>
                <AreaBox>
                  <Chip>Sum of Net B...<Arrow $dir="down" /></Chip>
                </AreaBox>
              </Area>
            </Areas>
            <PanelFooter>
              <DeferLabel><Check />Defer Layout Update</DeferLabel>
              <UpdateButton>Update</UpdateButton>
            </PanelFooter>
          </Panel>
        </Body>
        <StatusBar>
          <ReadyText>Ready</ReadyText>
          <svg width="14" height="14" viewBox="0 0 14 14">
            <circle cx="3" cy="3" r="2.8" fill="#555" />
            <path d="M1.5 6.5h11v7h-11z" fill="#fff" stroke="#555" />
            <rect x="5" y="2" width="8.5" height="3" fill="#555" />
            <path d="M3 8.5h2M6 8.5h2M9 8.5h2M3 11h2M6 11h2M9 11h2" stroke="#555" />
          </svg>
          <ViewActive><GridViewIcon /></ViewActive>
          <ViewButton $left={3}>
            <svg width="14" height="14" viewBox="0 0 14 14"><path d="M.5.5h13v13H.5z" stroke="#6a6a6a" fill="none" /><path d="M3.5 2.5h7v9h-7zM5 5h4M5 7h4M5 9h4" stroke="#6a6a6a" fill="none" /></svg>
          </ViewButton>
          <ViewButton>
            <svg width="14" height="14" viewBox="0 0 14 14"><path d="M.5.5h13v13H.5zM4.5.5v7h5v-7" stroke="#6a6a6a" fill="none" /></svg>
          </ViewButton>
          <ZoomControl>
            <svg width="7" height="3" viewBox="0 0 7 3"><rect width="7" height="2" fill="#555" /></svg>
            <ZoomTrack><ZoomThumb /></ZoomTrack>
            <svg width="9" height="9" viewBox="0 0 9 9"><path d="M0 4.5h9M4.5 0v9" stroke="#555" strokeWidth="2" /></svg>
          </ZoomControl>
          <ZoomValue>100%</ZoomValue>
        </StatusBar>
      </Frame>
      <ArrowLayer width="710" height="855" viewBox="0 0 710 855">
        <path
          d="M454 364 C 430 373, 412 392, 404 412 C 388 450, 378 490, 378 530 C 378 580, 390 630, 410 665 C 424 692, 438 708, 452 719"
          stroke="#000"
          strokeWidth="4"
          fill="none"
        />
        <path d="M464 727 L 447 722 L 456 712 Z" fill="#000" stroke="#000" strokeWidth="1.5" />
        <path d="M463 539 L 571 702" stroke="#000" strokeWidth="4" fill="none" />
        <path d="M577 714 L 564 704 L 575 697 Z" fill="#000" stroke="#000" strokeWidth="1.5" />
      </ArrowLayer>
    </Page>
  );
}
